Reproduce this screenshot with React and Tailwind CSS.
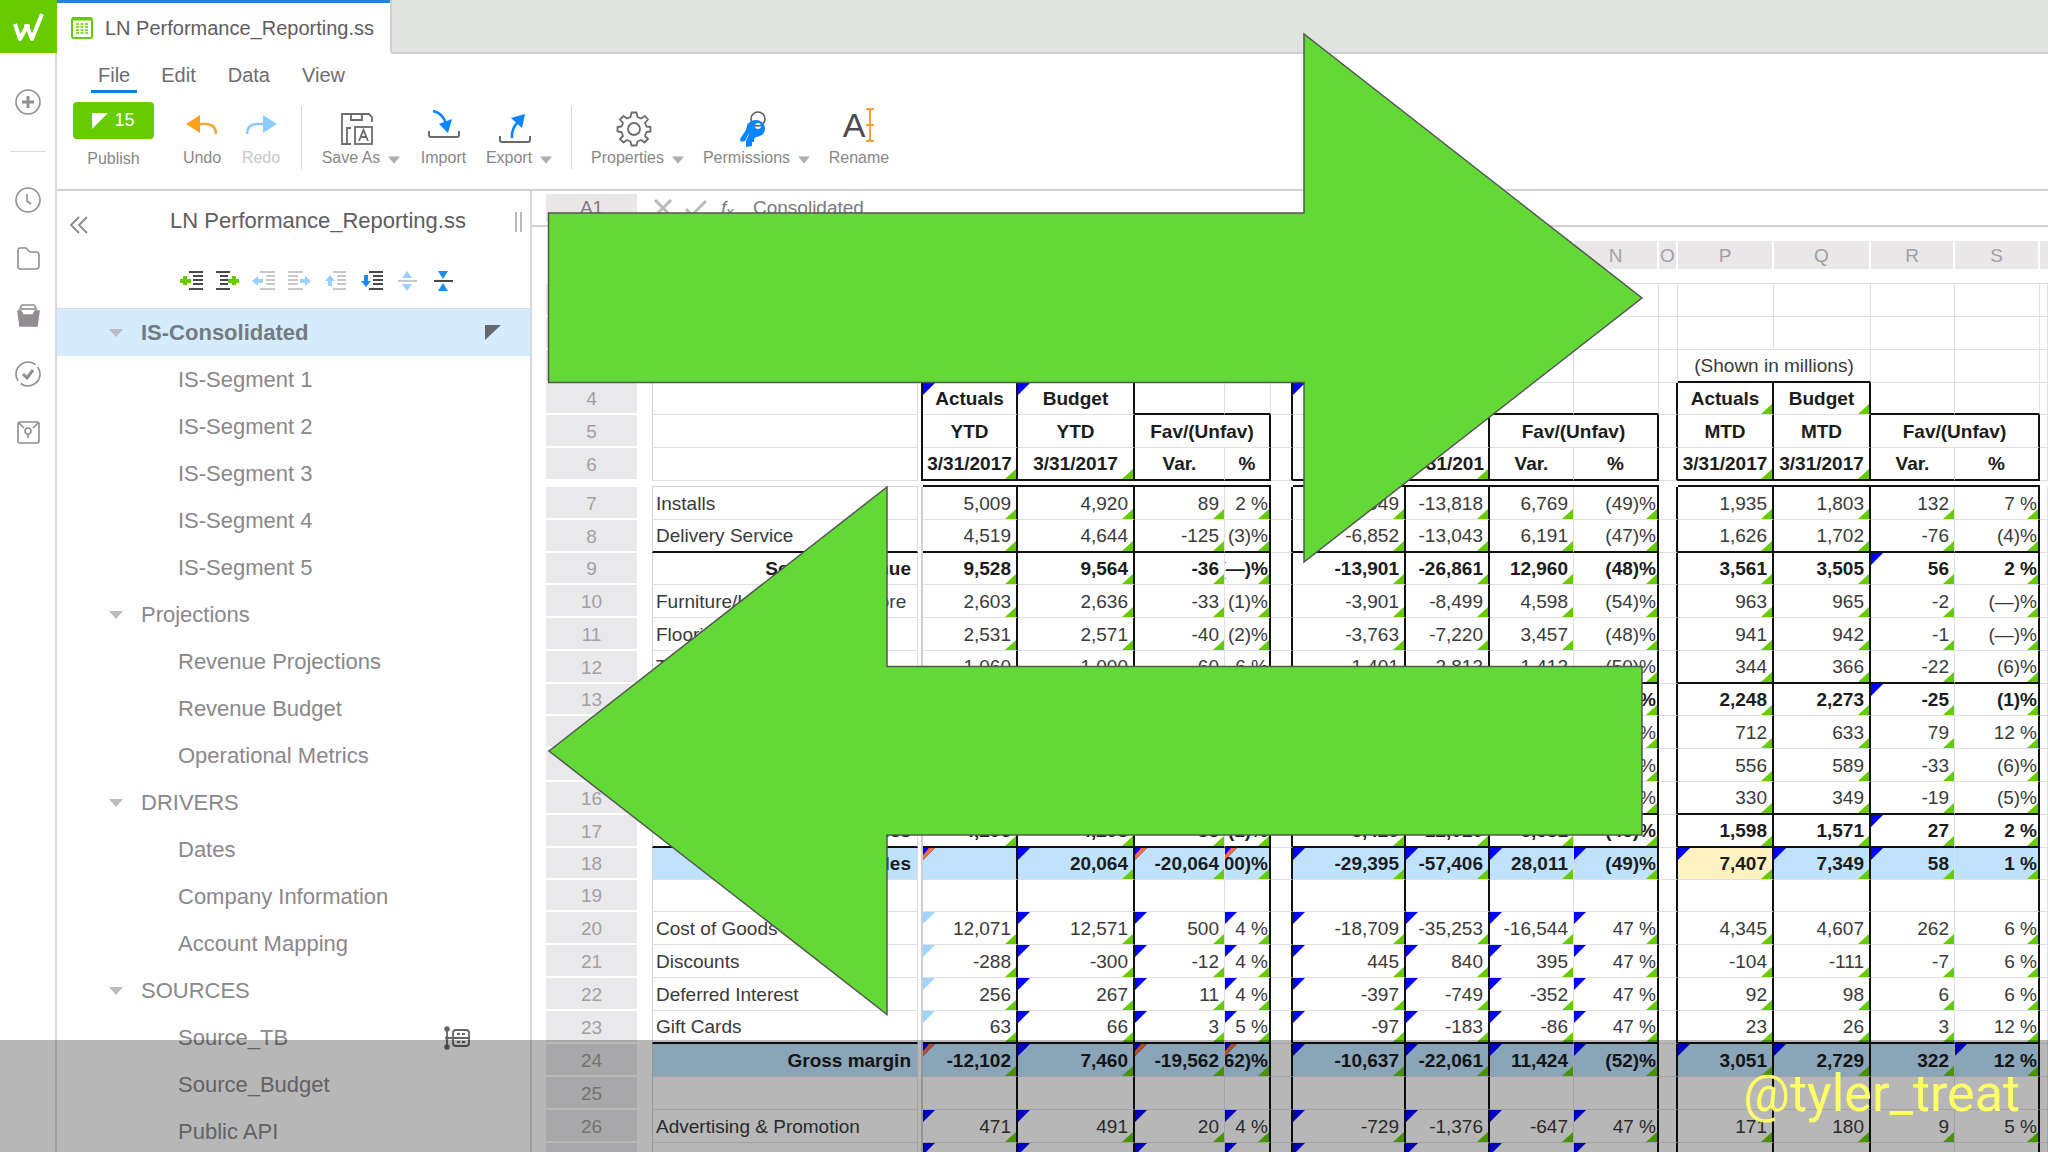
import React from 'react';
import clsx from 'clsx';

const TREE = [
  { name: 'IS-Consolidated', level: 0, active: true },
  { name: 'IS-Segment 1', level: 1 },
  { name: 'IS-Segment 2', level: 1 },
  { name: 'IS-Segment 3', level: 1 },
  { name: 'IS-Segment 4', level: 1 },
  { name: 'IS-Segment 5', level: 1 },
  { name: 'Projections', level: 0 },
  { name: 'Revenue Projections', level: 1 },
  { name: 'Revenue Budget', level: 1 },
  { name: 'Operational Metrics', level: 1 },
  { name: 'DRIVERS', level: 0 },
  { name: 'Dates', level: 1 },
  { name: 'Company Information', level: 1 },
  { name: 'Account Mapping', level: 1 },
  { name: 'SOURCES', level: 0 },
  { name: 'Source_TB', level: 1, linked: true },
  { name: 'Source_Budget', level: 1 },
  { name: 'Public API', level: 1 },
];

// spacer columns are '' : frozen pane gap
const COLUMNS = [
  { name: 'E', width: 'w-[266px]' },
  { name: '', width: 'w-[5px]' },
  { name: 'F', width: 'w-[95px]' },
  { name: 'G', width: 'w-[117px]' },
  { name: 'H', width: 'w-[90px]' },
  { name: 'I', width: 'w-[46px]' },
  { name: 'J', width: 'w-[22px]' },
  { name: 'K', width: 'w-[113px]' },
  { name: 'L', width: 'w-[84px]' },
  { name: 'M', width: 'w-[84px]' },
  { name: 'N', width: 'w-[85px]' },
  { name: 'O', width: 'w-[19px]' },
  { name: 'P', width: 'w-[96px]' },
  { name: 'Q', width: 'w-[97px]' },
  { name: 'R', width: 'w-[84px]' },
  { name: 'S', width: 'w-[85px]' },
];

// marks: b = blue, l = light blue, o = blue with orange stripe, . = none
const ROWS = [
  { n: 7, label: 'Installs', values: [['5,009', '4,920', '89', '2 %'], ['-7,049', '-13,818', '6,769', '(49)%'], ['1,935', '1,803', '132', '7 %']] },
  { n: 8, label: 'Delivery Service', rule: true, values: [['4,519', '4,644', '-125', '(3)%'], ['-6,852', '-13,043', '6,191', '(47)%'], ['1,626', '1,702', '-76', '(4)%']] },
  { n: 9, label: 'Service revenue', total: true, short: true, values: [['9,528', '9,564', '-36', '(—)%'], ['-13,901', '-26,861', '12,960', '(48)%'], ['3,561', '3,505', '56', '2 %']], marks: ['....', '....', '..b.'] },
  { n: 10, label: 'Furniture/Home Decor - Store', values: [['2,603', '2,636', '-33', '(1)%'], ['-3,901', '-8,499', '4,598', '(54)%'], ['963', '965', '-2', '(—)%']] },
  { n: 11, label: 'Flooring', values: [['2,531', '2,571', '-40', '(2)%'], ['-3,763', '-7,220', '3,457', '(48)%'], ['941', '942', '-1', '(—)%']] },
  { n: 12, label: 'Tile', rule: true, values: [['1,060', '1,000', '60', '6 %'], ['-1,401', '-2,813', '1,412', '(50)%'], ['344', '366', '-22', '(6)%']] },
  { n: 13, label: 'Product revenue', total: true, short: true, values: [['6,194', '6,207', '-13', '(—)%'], ['-9,065', '-18,532', '9,467', '(51)%'], ['2,248', '2,273', '-25', '(1)%']], marks: ['....', '....', '..b.'] },
  { n: 14, label: 'Rentals', values: [['1,905', '1,911', '-6', '(—)%'], ['-2,870', '-5,402', '2,532', '(47)%'], ['712', '633', '79', '12 %']] },
  { n: 15, label: 'Repairs', values: [['1,422', '1,430', '-8', '(1)%'], ['-2,110', '-3,920', '1,810', '(46)%'], ['556', '589', '-33', '(6)%']] },
  { n: 16, label: 'Other', rule: true, values: [['969', '952', '17', '2 %'], ['-1,449', '-2,688', '1,239', '(46)%'], ['330', '349', '-19', '(5)%']] },
  { n: 17, label: 'Other sales', total: true, rule: true, values: [['4,296', '4,293', '-33', '(1)%'], ['-6,429', '-12,010', '5,581', '(46)%'], ['1,598', '1,571', '27', '2 %']], marks: ['....', '....', '..b.'] },
  { n: 18, label: 'Total net sales', total: true, short: true, fill: true, values: [['', '20,064', '-20,064', '(100)%'], ['-29,395', '-57,406', '28,011', '(49)%'], ['7,407', '7,349', '58', '1 %']], marks: ['oboo', 'bbbb', 'bbb.'] },
  { n: 19, label: '', short: true, values: [['', '', '', ''], ['', '', '', ''], ['', '', '', '']] },
  { n: 20, label: 'Cost of Goods Sold', values: [['12,071', '12,571', '500', '4 %'], ['-18,709', '-35,253', '-16,544', '47 %'], ['4,345', '4,607', '262', '6 %']], marks: ['lbbb', 'bbbb', '....'] },
  { n: 21, label: 'Discounts', values: [['-288', '-300', '-12', '4 %'], ['445', '840', '395', '47 %'], ['-104', '-111', '-7', '6 %']], marks: ['lbbb', 'bbbb', '....'] },
  { n: 22, label: 'Deferred Interest', values: [['256', '267', '11', '4 %'], ['-397', '-749', '-352', '47 %'], ['92', '98', '6', '6 %']], marks: ['lbbb', 'bbbb', '....'] },
  { n: 23, label: 'Gift Cards', rule: true, values: [['63', '66', '3', '5 %'], ['-97', '-183', '-86', '47 %'], ['23', '26', '3', '12 %']], marks: ['lbbb', 'bbbb', '....'] },
  { n: 24, label: 'Gross margin', total: true, fill: true, values: [['-12,102', '7,460', '-19,562', '(162)%'], ['-10,637', '-22,061', '11,424', '(52)%'], ['3,051', '2,729', '322', '12 %']], marks: ['oboo', 'bbbb', 'bb.b'] },
  { n: 25, label: '', values: [['', '', '', ''], ['', '', '', ''], ['', '', '', '']] },
  { n: 26, label: 'Advertising & Promotion', values: [['471', '491', '20', '4 %'], ['-729', '-1,376', '-647', '47 %'], ['171', '180', '9', '5 %']], marks: ['bbbb', 'bbbb', '....'] },
  { n: 27, label: 'Occupancy', values: [['770', '800', '30', '4 %'], ['-1,381', '-2,261', '-1,180', '35 %'], ['280', '287', '17', '6 %']], marks: ['bbbb', 'bbbb', '....'] },
];

function Mark({ kind }) {
  if (!kind || kind === '.') return null;
  return (
    <svg className="absolute left-0 top-0" width="12" height="12" viewBox="0 0 12 12" aria-hidden="true">
      <path d="M0 0H12L0 12Z" fill={kind === 'l' ? '#9fd5ff' : '#0000ff'} />
      {kind === 'o' && <path d="M6 0H12L0 12V7Z" fill="#f2703a" />}
    </svg>
  );
}

function Corner() {
  return (
    <svg className="absolute bottom-0 right-0" width="11" height="10" viewBox="0 0 11 10" aria-hidden="true">
      <path d="M11 0V10H0Z" fill="#66cc00" />
    </svg>
  );
}

function Cell({ text, edge, base, mark, corner, bold, justify = 'justify-end', pad = 'pr-[5px]', className, colSpan }) {
  return (
    <td
      colSpan={colSpan}
      className={clsx(
        'relative p-0',
        edge ? 'border-r-2 border-r-[#111]' : 'border-r border-r-[#e2dfe2]',
        base ? 'border-b-2 border-b-[#111]' : 'border-b border-b-[#e2dfe2]',
        bold ? 'font-bold text-[#1c1c1c]' : 'text-[#3a3a3a]',
        className
      )}
    >
      <Mark kind={mark} />
      {corner && <Corner />}
      <div className={clsx('relative flex overflow-hidden whitespace-nowrap pt-px leading-6', justify, pad)}>{text}</div>
    </td>
  );
}

function RowNumber({ n }) {
  return (
    <th scope="row" className="border-b-2 border-white bg-[#e9e8ea] p-0 pt-0.5 text-center font-normal leading-6 text-[#a2a0a2]">
      {n}
    </th>
  );
}

function Gap({ edge, base }) {
  return <Cell text="" edge={edge} base={base} />;
}

function Pane({ dark }) {
  return <td className={clsx('border-r-2 p-0', dark ? 'border-r-[#111]' : 'border-r-[#cfcdcf]')} />;
}

function DataRow({ row }) {
  return (
    <tr className={row.short ? 'h-[32px]' : 'h-[33px]'}>
      <RowNumber n={row.n} />
      <td />
      <Cell
        text={row.label}
        bold={row.total}
        base={row.rule}
        justify={row.total ? 'justify-end' : 'justify-start'}
        pad={row.total ? 'pr-1.5' : 'pl-[3px]'}
        className={clsx('border-l border-l-[#d4d2d4]', row.fill && 'bg-[#bfe3ff]')}
      />
      <Pane />
      {row.values.map((group, g) => (
        <React.Fragment key={g}>
          {group.map((value, i) => (
            <Cell
              key={i}
              text={value}
              bold={row.total}
              base={row.rule}
              edge={i !== 2}
              corner={value !== ''}
              mark={row.marks?.[g][i]}
              pad={i === 3 ? 'pr-px' : 'pr-[5px]'}
              className={row.fill && (row.n === 18 && g === 2 && i === 0 ? 'bg-[#fdf2c0]' : 'bg-[#bfe3ff]')}
            />
          ))}
          {g < 2 && <Gap edge />}
        </React.Fragment>
      ))}
      <Cell text="" />
    </tr>
  );
}

function BlankRow({ n }) {
  const last = n === 3;
  return (
    <tr className="h-[33px]">
      <RowNumber n={n} />
      <td />
      <Cell text="" className="border-l border-l-[#d4d2d4]" />
      <Pane />
      {[0, 1, 2].map((g) => (
        <React.Fragment key={g}>
          {last ? (
            <Cell text="(Shown in millions)" colSpan={2} base justify="justify-center" pad="px-0" />
          ) : (
            <>
              <Cell text="" />
              <Cell text="" />
            </>
          )}
          <Cell text="" />
          <Cell text="" />
          {g < 2 && <Gap />}
        </React.Fragment>
      ))}
      <Cell text="" />
    </tr>
  );
}

const center = { bold: true, justify: 'justify-center', pad: 'px-0' };

function HeaderRows() {
  const periods = ['YTD', 'QTD', 'MTD'];
  return (
    <>
      <tr className="h-[32px]">
        <RowNumber n={4} />
        <td />
        <Cell text="" className="border-l border-l-[#d4d2d4]" />
        <Pane dark />
        {periods.map((p, g) => (
          <React.Fragment key={p}>
            <Cell {...center} text="Actuals" edge mark={g < 2 ? 'b' : '.'} corner={g === 2} />
            <Cell {...center} text="Budget" edge mark={g < 2 ? 'b' : '.'} corner={g === 2} />
            <Cell text="" base />
            <Cell text="" base />
            {g < 2 && <Gap edge />}
          </React.Fragment>
        ))}
        <Cell text="" />
      </tr>
      <tr className="h-[33px]">
        <RowNumber n={5} />
        <td />
        <Cell text="" className="border-l border-l-[#d4d2d4]" />
        <Pane dark />
        {periods.map((p, g) => (
          <React.Fragment key={p}>
            <Cell {...center} text={p} edge />
            <Cell {...center} text={p} edge />
            <Cell {...center} text="Fav/(Unfav)" edge colSpan={2} />
            {g < 2 && <Gap edge />}
          </React.Fragment>
        ))}
        <Cell text="" />
      </tr>
      <tr className="h-[33px]">
        <RowNumber n={6} />
        <td />
        <Cell text="" className="border-l border-l-[#d4d2d4]" />
        <Pane dark />
        {periods.map((p, g) => (
          <React.Fragment key={p}>
            <Cell {...center} text="3/31/2017" edge base corner />
            <Cell {...center} text={g === 1 ? '3/31/201' : '3/31/2017'} edge base corner />
            <Cell {...center} text="Var." base />
            <Cell {...center} text="%" edge base />
            {g < 2 && <Gap edge />}
          </React.Fragment>
        ))}
        <Cell text="" />
      </tr>
    </>
  );
}

function Sheet() {
  return (
    <table className="w-full table-fixed border-separate border-spacing-0 text-[19px]">
      <colgroup>
        <col className="w-[91px]" />
        <col className="w-[15px]" />
        {COLUMNS.map((c, i) => (
          <col key={i} className={c.width} />
        ))}
        <col />
      </colgroup>
      <thead>
        <tr className="h-[28px]">
          <td />
          <td />
          {COLUMNS.map((c, i) =>
            c.name ? (
              <th key={i} scope="col" className="border-r-2 border-white bg-[#e9e7e8] p-0 pt-0.5 text-center font-normal leading-6 text-[#a2a0a2]">
                {c.name}
              </th>
            ) : (
              <td key={i} />
            )
          )}
          <th scope="col" className="bg-[#e9e7e8] p-0" />
        </tr>
        <tr className="h-[15px]">
          <td />
          <td />
          <td colSpan={17} className="border-b border-b-[#e2dfe2] p-0" />
        </tr>
      </thead>
      <tbody>
        <BlankRow n={1} />
        <BlankRow n={2} />
        <BlankRow n={3} />
        <HeaderRows />
        <tr className="h-[6px]">
          <td className="p-0" />
          <td className="p-0" />
          <td className="border-b border-b-[#d4d2d4] p-0" />
          <td className="p-0" />
          <td colSpan={4} className="border-b-2 border-b-[#111] p-0" />
          <td className="p-0" />
          <td colSpan={4} className="border-b-2 border-b-[#111] p-0" />
          <td className="p-0" />
          <td colSpan={4} className="border-b-2 border-b-[#111] p-0" />
          <td className="p-0" />
        </tr>
        {ROWS.map((row) => (
          <DataRow key={row.n} row={row} />
        ))}
      </tbody>
    </table>
  );
}

function Caret({ className }) {
  return (
    <svg width="14" height="8" viewBox="0 0 14 8" className={className} aria-hidden="true">
      <path d="M0 0H14L7 8Z" fill="currentColor" />
    </svg>
  );
}

const railIcons = [
  {
    label: 'Recent',
    art: (
      <>
        <circle cx="13" cy="13" r="12" />
        <path d="M12 7V14L16 17" />
      </>
    ),
  },
  {
    label: 'Files',
    art: <path d="M5 3H11L15 7H21Q24 7 24 10V21Q24 24 21 24H5Q3 24 3 21V6Q3 3 5 3Z" />,
  },
  {
    label: 'Inbox',
    art: (
      <>
        <path d="M5 5L7 2H19L21 5" />
        <path d="M4 6H22" />
        <path d="M3 8H6L8 12H18L20 8H24L22 23H5Z" fill="currentColor" />
      </>
    ),
  },
  {
    label: 'Tasks',
    art: (
      <>
        <circle cx="13" cy="13" r="12" strokeDasharray="34 3.700" transform="rotate(-36 13 13)" />
        <path d="M8 13L12 17L18 9" strokeWidth="3" />
      </>
    ),
  },
  {
    label: 'Ideas',
    art: (
      <>
        <rect x="3" y="3" width="21" height="21" rx="2" />
        <path d="M4 4L9 9M23 4L18 9M13 15V19" />
        <circle cx="13" cy="12" r="3" />
      </>
    ),
  },
];

function RailIcon({ children }) {
  return (
    <svg width="26" height="26" viewBox="0 0 26 26" fill="none" stroke="currentColor" strokeWidth="1.6" aria-hidden="true">
      {children}
    </svg>
  );
}

function Rail() {
  return (
    <nav className="flex w-[57px] shrink-0 flex-col items-center border-r-2 border-[#dcd9dc] text-[#918d91]">
      <a href="#home" aria-label="Home" className="-mr-0.5 flex h-[53px] w-[57px] items-center justify-center bg-[#66cc00]">
        <svg width="34" height="32" viewBox="0 0 34 32" fill="none" stroke="#fff" strokeWidth="4" strokeLinejoin="round" aria-hidden="true">
          <path d="M3 13L8 28L15 15L20 28L30 3" />
          <path d="M12 15H18" strokeWidth="3" />
        </svg>
      </a>
      <button aria-label="Create" className="flex h-[98px] w-full items-center justify-center">
        <RailIcon>
          <circle cx="13" cy="13" r="12" />
          <path d="M13 7V19M7 13H19" strokeWidth="3" />
        </RailIcon>
      </button>
      <hr className="mb-[19px] w-9 border-[#dcd9dc]" />
      {railIcons.map((icon) => (
        <button key={icon.label} aria-label={icon.label} className="flex h-[58px] w-full items-center justify-center">
          <RailIcon>{icon.art}</RailIcon>
        </button>
      ))}
    </nav>
  );
}

const tools = {
  undo: (
    <svg width="32" height="20" viewBox="0 0 32 20" fill="none" aria-hidden="true">
      <path d="M12 9H19Q30 9 30 19" stroke="#f5a83a" strokeWidth="2.5" />
      <path d="M0 9L14 0V18Z" fill="#fba11c" />
    </svg>
  ),
  redo: (
    <svg width="32" height="20" viewBox="0 0 32 20" fill="none" aria-hidden="true">
      <path d="M20 9H13Q2 9 2 19" stroke="#8ccaff" strokeWidth="2.5" />
      <path d="M32 9L18 0V18Z" fill="#8ccaff" />
    </svg>
  ),
  save: (
    <svg width="34" height="34" viewBox="0 0 34 34" fill="none" stroke="#6d6b6d" strokeWidth="1.8" aria-hidden="true">
      <path d="M8 32H2V2H29L32 5V10" />
      <path d="M11 2V8H22V2M11 16H7V32H11" />
      <rect x="15" y="15" width="17" height="17" />
      <path d="M19 29L23.500 18L28 29M20.500 25H26.500" />
    </svg>
  ),
  import: (
    <svg width="32" height="30" viewBox="0 0 32 30" fill="none" aria-hidden="true">
      <path d="M1 21V25Q1 27 3 27H29Q31 27 31 25V21" stroke="#6b696b" strokeWidth="2" />
      <path d="M5 1Q15 3 18 14" stroke="#0a84ff" strokeWidth="2.5" />
      <path d="M11 14L24 9L20 23Z" fill="#0a84ff" />
    </svg>
  ),
  export: (
    <svg width="32" height="30" viewBox="0 0 32 30" fill="none" aria-hidden="true">
      <path d="M1 22V26Q1 28 3 28H29Q31 28 31 26V22" stroke="#6b696b" strokeWidth="2" />
      <path d="M13 24Q12 14 20 7" stroke="#0a84ff" strokeWidth="2.5" />
      <path d="M12 4L26 0L23 14Z" fill="#0a84ff" />
    </svg>
  ),
  gear: (
    <svg width="36" height="36" viewBox="0 0 36 36" fill="none" stroke="#6d6b6d" strokeWidth="1.8" strokeLinejoin="round" aria-hidden="true">
      <path d="M15.500 1.500H20.500L21.500 6L25 7.500L29 5L32 8.500L29 12L30.500 15.500L34.500 16V20.500L30.500 21L29 25L32 28L28.500 31.500L25 29L21.500 30.500L20.500 34.500H15.500L14.500 30.500L11 29L7.500 31.500L4 28L7 25L5.500 21L1.500 20.500V16L5.500 15.500L7 12L4 8.500L7.500 5L11 7.500L14.500 6Z" />
      <circle cx="18" cy="18" r="6" />
    </svg>
  ),
  keys: (
    <svg width="28" height="36" viewBox="0 0 28 36" fill="none" aria-hidden="true">
      <circle cx="19" cy="8" r="7" stroke="#5d5b5d" strokeWidth="1.6" />
      <path d="M9 11L7 19L1 28L2 31L6 30L10 22" fill="#0a84ff" />
      <path fillRule="evenodd" d="M17 9A9 9 0 0 1 26 17Q26 25 17 26L15 28V31H13V35L7 36V30L10 23Q7 18 9 13Q12 9 17 9ZM19 12A3 3 0 1 0 19 18A3 3 0 1 0 19 12Z" fill="#0a84ff" />
    </svg>
  ),
  rename: (
    <span className="flex items-center">
      <span className="text-[34px] leading-8 text-[#4d4b4d]">A</span>
      <svg width="10" height="34" viewBox="0 0 10 34" fill="none" stroke="#f0a13c" strokeWidth="2" aria-hidden="true">
        <path d="M1 1H4L5 3L6 1H9M5 3V31M1 33H4L5 31L6 33H9M1 17H9" />
      </svg>
    </span>
  ),
};

function Tool({ icon, label, width, menu, disabled }) {
  return (
    <button disabled={disabled} className={clsx('flex flex-col items-center', width, disabled ? 'text-[#c9c7c9]' : 'text-[#8a878a]')}>
      <span className={clsx('flex h-[46px] items-center justify-center', menu && 'pr-2 pt-2')}>{icon}</span>
      <span className="flex items-center gap-2 whitespace-nowrap text-[16px] leading-5">
        {label}
        {menu && <Caret className="mt-1 w-3 text-[#b0adb0]" />}
      </span>
    </button>
  );
}

function Toolbar() {
  return (
    <header className="border-b-2 border-[#d3d1d3]">
      <div className="flex gap-8 pl-[34px] pt-2 text-[20px] text-[#6f6c6f]">
        <button className="border-b-[3px] border-[#0f7fe0] px-[7px] pb-0.5 leading-[26px]">File</button>
        <button className="-ml-2 border-b-[3px] border-transparent pb-0.5 leading-[26px]">Edit</button>
        <button className="border-b-[3px] border-transparent pb-0.5 leading-[26px]">Data</button>
        <button className="border-b-[3px] border-transparent pb-0.5 leading-[26px]">View</button>
      </div>
      <div className="flex h-[96px] gap-[19px] pl-4 pt-[9px]">
        <button className="mr-2.5 flex w-[81px] flex-col items-center text-[16px] text-[#8a878a]">
          <span className="flex h-[37px] w-full items-center justify-center gap-1.5 rounded bg-[#66cc00] text-[18px] text-white">
            <svg width="16" height="16" viewBox="0 0 16 16" aria-hidden="true">
              <path d="M0 0H16L0 16Z" fill="#fff" />
            </svg>
            15
          </span>
          <span className="mt-2.5 leading-5">Publish</span>
        </button>
        <Tool icon={tools.undo} label="Undo" width="w-[38px]" />
        <Tool icon={tools.redo} label="Redo" width="w-[42px]" disabled />
        <div className="mt-1 h-[63px] w-px bg-[#d8d6d8]" />
        <Tool icon={tools.save} label="Save As" width="w-[80px]" menu />
        <Tool icon={tools.import} label="Import" width="w-[47px]" />
        <Tool icon={tools.export} label="Export" width="w-[66px]" menu />
        <div className="mt-1 h-[63px] w-px bg-[#d8d6d8]" />
        <Tool icon={tools.gear} label="Properties" width="w-[93px]" menu />
        <Tool icon={tools.keys} label="Permissions" width="w-[107px]" menu />
        <Tool icon={tools.rename} label="Rename" width="w-[60px]" />
      </div>
    </header>
  );
}

function OutlineIcon({ children }) {
  return (
    <svg width="24" height="20" viewBox="0 0 24 20" aria-hidden="true">
      {children}
    </svg>
  );
}

const outlineTools = [
  { label: 'Insert before', art: <><path d="M9 1H23M13 5H23M13 9H23M13 13H23M9 18H23" stroke="#4a484a" strokeWidth="2" /><path d="M5 5V14M0 10H11" stroke="#66cc00" strokeWidth="4" /></> },
  { label: 'Insert after', art: <><path d="M0 1H14M4 5H12M4 9H12M4 13H12M0 18H14" stroke="#4a484a" strokeWidth="2" /><path d="M18 5V14M12 10H23" stroke="#66cc00" strokeWidth="4" /></> },
  { label: 'Outdent', art: <><path d="M8 1H23M14 5H23M14 9H23M14 13H23M8 18H23" stroke="#c9c7c9" strokeWidth="2" /><path d="M0 10L6 5V8H11V12H6V15Z" fill="#9ad0ff" /></> },
  { label: 'Indent', art: <><path d="M0 1H15M0 5H10M0 9H10M0 13H10M0 18H15" stroke="#c9c7c9" strokeWidth="2" /><path d="M23 10L17 5V8H12V12H17V15Z" fill="#9ad0ff" /></> },
  { label: 'Move up', art: <><path d="M9 1H22M13 5H22M13 9H22M13 13H22M9 18H22" stroke="#c9c7c9" strokeWidth="2" /><path d="M6 4L11 10H8V15H4V10H1Z" fill="#9ad0ff" /></> },
  { label: 'Move down', art: <><path d="M9 1H23M13 5H23M13 9H23M13 13H23M9 18H23" stroke="#4a484a" strokeWidth="2" /><path d="M6 16L11 10H8V4H4V10H1Z" fill="#1d8bf0" /></> },
  { label: 'Expand', art: <><path d="M2 10H21" stroke="#c9c7c9" strokeWidth="2" /><path d="M11 0L16 7H6ZM11 20L16 13H6Z" fill="#9ad0ff" /></> },
  { label: 'Collapse', art: <><path d="M2 10H21" stroke="#4a484a" strokeWidth="2" /><path d="M11 8L16 0H6ZM11 12L16 20H6Z" fill="#1d8bf0" /></> },
];

function Sidebar() {
  return (
    <aside className="w-[475px] shrink-0 border-r-2 border-[#d9d7d9] text-[22px] text-[#8b888b]">
      <div className="flex h-[118px] border-b border-[#dcdcdc] pr-2">
        <button aria-label="Collapse panel" className="flex w-16 justify-center pr-8 pt-[25px]">
          <svg width="18" height="18" viewBox="0 0 18 18" fill="none" stroke="#8b888b" strokeWidth="1.8" className="ml-3 shrink-0" aria-hidden="true">
            <path d="M9 1L1 9L9 17M17 1L9 9L17 17" />
          </svg>
        </button>
        <div className="flex flex-1 flex-col items-center pt-4">
          <h1 className="leading-7 text-[#5f5c5f]">LN Performance_Reporting.ss</h1>
          <div className="mt-9 flex gap-3">
            {outlineTools.map((t) => (
              <button key={t.label} aria-label={t.label}>
                <OutlineIcon>{t.art}</OutlineIcon>
              </button>
            ))}
          </div>
        </div>
        <div className="mt-[21px] h-5 w-[7px] border-x-2 border-[#bcb9bc]" />
      </div>
      <ul>
        {TREE.map((item) => (
          <li key={item.name} className={clsx('flex h-[47px] items-center', item.active ? 'bg-[#d5ecff] pr-[29px]' : 'pr-8')}>
            <a href={`#${item.name}`} className={clsx('flex flex-1 items-center', item.level ? 'pl-[121px]' : 'gap-[18px] pl-[52px]', item.active && 'font-bold text-[#737b80]')}>
              {item.level === 0 && <Caret className="text-[#bcbcbf]" />}
              {item.name}
            </a>
            {item.active && (
              <svg width="16" height="15" viewBox="0 0 16 15" aria-hidden="true">
                <path d="M0 0H16L0 15Z" fill="#666a6e" />
              </svg>
            )}
            {item.linked && (
              <svg width="26" height="24" viewBox="0 0 26 24" fill="none" stroke="#666366" strokeWidth="1.8" className="mr-7" aria-hidden="true">
                <path d="M3 2V22M3 12H26" />
                <rect x="9" y="4" width="16" height="16" rx="3" />
                <path d="M13 8H16M18 8H21M13 16H16M18 16H21" />
                <circle cx="3" cy="3" r="1.800" fill="#666366" />
                <circle cx="3" cy="12" r="1" fill="#666366" />
                <circle cx="3" cy="21" r="1.800" fill="#666366" />
              </svg>
            )}
          </li>
        ))}
      </ul>
    </aside>
  );
}

function FormulaBar() {
  return (
    <div className="flex h-9 items-center border-b-2 border-[#d3d1d3] pl-[14px] text-[19px] text-[#7d7a7d]">
      <input aria-label="Cell" defaultValue="A1" className="h-[28px] w-[91px] bg-[#e9e7e8] text-center" />
      <button aria-label="Cancel" className="ml-4">
        <svg width="20" height="20" viewBox="0 0 20 20" stroke="#bdbabd" strokeWidth="3" aria-hidden="true">
          <path d="M2 2L18 18M18 2L2 18" />
        </svg>
      </button>
      <button aria-label="Accept" className="ml-3">
        <svg width="22" height="20" viewBox="0 0 22 20" fill="none" stroke="#bdbabd" strokeWidth="3" aria-hidden="true">
          <path d="M1 11L7 17L21 3" />
        </svg>
      </button>
      <span className="ml-3.5 w-7 italic">
        f<sub>x</sub>
      </span>
      <input aria-label="Formula" defaultValue="Consolidated" className="flex-1 pl-1" />
    </div>
  );
}

export default function App() {
  return (
    <div className="relative flex h-screen overflow-hidden bg-[#fefefe] font-['Liberation_Sans',Arial,sans-serif]">
      <Rail />
      <div className="flex min-w-0 flex-1 flex-col">
        <div className="flex h-[54px] shrink-0">
          <a href="#report" className="flex items-center gap-3 border-t-[3px] border-[#1f83db] px-3.5 pb-0.5 text-[20px] text-[#5f5c5f]">
            <svg width="22" height="22" viewBox="0 0 22 22" fill="none" stroke="#66cc00" strokeWidth="2" aria-hidden="true">
              <rect x="1" y="1" width="20" height="20" rx="2" />
              <path d="M1 2H21" strokeWidth="3" />
              <path d="M5 7H17M5 10H17M5 13H17M5 16H17" strokeWidth="1.600" strokeDasharray="3 1.500" />
            </svg>
            <span className="pr-0.5">LN Performance_Reporting.ss</span>
          </a>
          <div className="flex-1 rounded-bl border-b-2 border-l-2 border-[#cfcfcf] bg-[#e1e3e1]" />
        </div>
        <Toolbar />
        <div className="flex min-h-0 flex-1">
          <Sidebar />
          <main className="min-w-0 flex-1 overflow-hidden">
            <FormulaBar />
            <div className="overflow-hidden pl-[14px] pt-[14px]">
              <Sheet />
            </div>
          </main>
        </div>
      </div>

      <svg className="absolute left-[547px] top-[31px]" width="1098" height="988" viewBox="547 31 1098 988" fill="#63d936" stroke="#555" strokeWidth="1.500" aria-hidden="true">
        <path d="M548.500 213H1304V34L1642 298L1304 562V382.500H548.500Z" />
        <path d="M549 751L887 487V666.500H1642V835H887V1014.500Z" />
      </svg>

      <div className="absolute inset-x-0 bottom-0 flex h-[112px] justify-end bg-black/28 pr-7 pt-6 font-['Roboto',sans-serif] text-[52px] leading-[60px] text-[#ffff66]">
        @tyler_treat
      </div>
    </div>
  );
}
